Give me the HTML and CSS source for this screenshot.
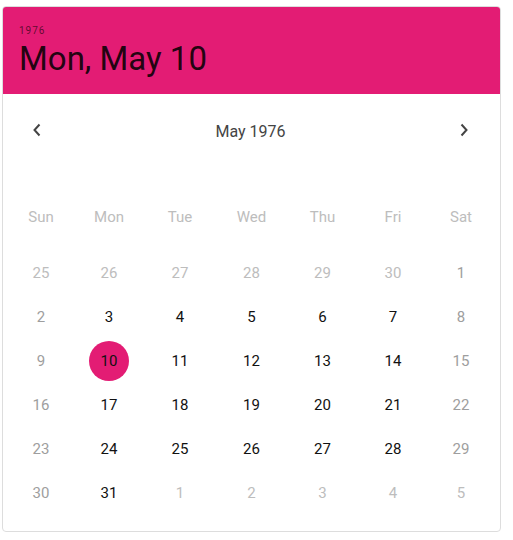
FILE: index.html
```html
<!DOCTYPE html>
<html lang="en">
<head>
  <meta charset="UTF-8" />
  <meta name="viewport" content="width=device-width, initial-scale=1.0"/>
  <title>Date picker</title>
  <link rel="stylesheet" href="styles.css">
</head>
<body>
  <div class="picker">
    <div class="picker-header">
      <div class="picker-year">1976</div>
      <div class="picker-date">Mon, May 10</div>
    </div>

    <div class="month-nav">
      <button class="nav-btn" aria-label="Previous month">
        <svg width="10" height="14" viewBox="0 0 10 14"><path d="M7.5 1.5 L2.5 7 L7.5 12.5" fill="none" stroke="#444" stroke-width="2"/></svg>
      </button>
      <span class="month-label">May 1976</span>
      <button class="nav-btn" aria-label="Next month">
        <svg width="10" height="14" viewBox="0 0 10 14"><path d="M2.5 1.5 L7.5 7 L2.5 12.5" fill="none" stroke="#444" stroke-width="2"/></svg>
      </button>
    </div>

    <div class="weekdays">
      <span>Sun</span><span>Mon</span><span>Tue</span><span>Wed</span><span>Thu</span><span>Fri</span><span>Sat</span>
    </div>

    <div class="days">
      <span class="day outside">25</span><span class="day outside">26</span><span class="day outside">27</span><span class="day outside">28</span><span class="day outside">29</span><span class="day outside">30</span><span class="day weekend">1</span>
      <span class="day weekend">2</span><span class="day">3</span><span class="day">4</span><span class="day">5</span><span class="day">6</span><span class="day">7</span><span class="day weekend">8</span>
      <span class="day weekend">9</span><span class="day selected"><b>10</b></span><span class="day">11</span><span class="day">12</span><span class="day">13</span><span class="day">14</span><span class="day weekend">15</span>
      <span class="day weekend">16</span><span class="day">17</span><span class="day">18</span><span class="day">19</span><span class="day">20</span><span class="day">21</span><span class="day weekend">22</span>
      <span class="day weekend">23</span><span class="day">24</span><span class="day">25</span><span class="day">26</span><span class="day">27</span><span class="day">28</span><span class="day weekend">29</span>
      <span class="day weekend">30</span><span class="day">31</span><span class="day outside">1</span><span class="day outside">2</span><span class="day outside">3</span><span class="day outside">4</span><span class="day outside">5</span>
    </div>
  </div>
</body>
</html>
```

FILE: styles.css
```css
body {
  margin: 0;
  padding: 6px 0 0 2px;
  background: #fff;
  font-family: Roboto, "Noto Sans", sans-serif;
}
.picker {
  width: 497px;
  border: 1px solid #ddd;
  border-radius: 4px;
  overflow: hidden;
  padding-bottom: 16px;
}
.picker-header {
  background: #e31c74;
  height: 87px;
  box-sizing: border-box;
  padding: 17px 16px 0;
  color: rgba(0, 0, 0, 0.87);
}
.picker-year {
  font-size: 10px;
  letter-spacing: 1px;
  color: rgba(0, 0, 0, 0.6);
  line-height: 14px;
}
.picker-date {
  font-size: 33px;
  line-height: 40px;
  margin-top: 1px;
}
.month-nav {
  display: flex;
  align-items: center;
  justify-content: space-between;
  height: 48px;
  margin-top: 12px;
  padding: 0 29px 0 27px;
}
.nav-btn {
  background: none;
  border: none;
  padding: 0;
  width: 14px;
  height: 14px;
  display: flex;
  align-items: center;
  justify-content: center;
  cursor: pointer;
}
.month-label {
  font-size: 16px;
  color: #444;
  padding-top: 2px;
}
.weekdays, .days {
  display: grid;
  grid-template-columns: 66px 70px 72px 71px 71px 70px 66px;
  padding-left: 5px;
}
.weekdays {
  margin-top: 41px;
  margin-bottom: 12px;
}
.weekdays span {
  height: 44px;
  display: flex;
  align-items: center;
  justify-content: center;
  font-size: 15px;
  color: #bdbdbd;
}
.day {
  height: 44px;
  display: flex;
  align-items: center;
  justify-content: center;
  font-size: 15px;
  color: #111;
}
.day.weekend {
  color: #9e9e9e;
}
.day.outside {
  color: #bdbdbd;
}
.day.selected b {
  font-weight: normal;
  width: 40px;
  height: 40px;
  border-radius: 50%;
  background: #e31c74;
  display: flex;
  align-items: center;
  justify-content: center;
}
```
